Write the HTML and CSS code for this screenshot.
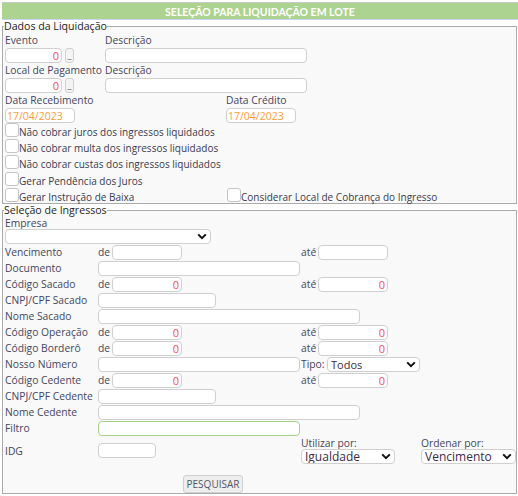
FILE: index.html
```html
<!DOCTYPE html>
<html>
<head>
<meta charset="utf-8">
<link rel="stylesheet" href="styles.css">
</head>
<body>
<div class="page">
  <div class="header">SELEÇÃO PARA LIQUIDAÇÃO EM LOTE</div>

  <fieldset class="fs fs1">
    <legend>Dados da Liquidação</legend>
    <div class="pair">
      <div class="cev">
        <div class="lbl">Evento</div>
        <div class="evwrap"><input class="inp w57 num" value="0"><span class="dots">_</span></div>
      </div>
      <div>
        <div class="lbl">Descrição</div>
        <input class="inp w202">
      </div>
    </div>
    <div class="pair">
      <div class="cev">
        <div class="lbl">Local de Pagamento</div>
        <div class="evwrap"><input class="inp w57 num" value="0"><span class="dots">_</span></div>
      </div>
      <div>
        <div class="lbl">Descrição</div>
        <input class="inp w202">
      </div>
    </div>
    <div class="pair">
      <div class="cdate">
        <div class="lbl">Data Recebimento</div>
        <input class="inp w69 date" value="17/04/2023">
      </div>
      <div>
        <div class="lbl">Data Crédito</div>
        <input class="inp w69 date" value="17/04/2023">
      </div>
    </div>
    <div class="chk"><span class="box"></span><span class="ctext">Não cobrar juros dos ingressos liquidados</span></div>
    <div class="chk"><span class="box"></span><span class="ctext">Não cobrar multa dos ingressos liquidados</span></div>
    <div class="chk"><span class="box"></span><span class="ctext">Não cobrar custas dos ingressos liquidados</span></div>
    <div class="chk"><span class="box"></span><span class="ctext">Gerar Pendência dos Juros</span></div>
    <div class="chk">
      <div class="chkcell"><span class="box"></span><span class="ctext">Gerar Instrução de Baixa</span></div>
      <div class="chkcell"><span class="box"></span><span class="ctext">Considerar Local de Cobrança do Ingresso</span></div>
    </div>
  </fieldset>

  <fieldset class="fs fs2">
    <legend>Seleção de Ingressos</legend>
    <div class="lbl lbl12">Empresa</div>
    <div class="sel w206"><select class="s"><option></option></select><svg class="chev" viewBox="0 0 10 7"><path d="M1.2 1.4 L5 5.2 L8.8 1.4" fill="none" stroke="#111" stroke-width="2"/></svg></div>

    <div class="row"><span class="rl">Vencimento</span><span class="de">de</span><input class="inp w70"><span class="sp"></span><span class="ate">até</span><input class="inp w70"></div>
    <div class="row"><span class="rl">Documento</span><input class="inp w202"></div>
    <div class="row"><span class="rl">Código Sacado</span><span class="de">de</span><input class="inp w70 num" value="0"><span class="sp"></span><span class="ate">até</span><input class="inp w70 num" value="0"></div>
    <div class="row"><span class="rl">CNPJ/CPF Sacado</span><input class="inp w118"></div>
    <div class="row"><span class="rl">Nome Sacado</span><input class="inp w262"></div>
    <div class="row"><span class="rl">Código Operação</span><span class="de">de</span><input class="inp w70 num" value="0"><span class="sp"></span><span class="ate">até</span><input class="inp w70 num" value="0"></div>
    <div class="row"><span class="rl">Código Borderô</span><span class="de">de</span><input class="inp w70 num" value="0"><span class="sp"></span><span class="ate">até</span><input class="inp w70 num" value="0"></div>
    <div class="row"><span class="rl">Nosso Número</span><input class="inp w202"><span class="tipo">Tipo:</span><div class="sel w93"><select class="s dark todos"><option>Todos</option></select><svg class="chev" viewBox="0 0 10 7"><path d="M1.2 1.4 L5 5.2 L8.8 1.4" fill="none" stroke="#111" stroke-width="2"/></svg></div></div>
    <div class="row"><span class="rl">Código Cedente</span><span class="de">de</span><input class="inp w70 num" value="0"><span class="sp"></span><span class="ate">até</span><input class="inp w70 num" value="0"></div>
    <div class="row"><span class="rl">CNPJ/CPF Cedente</span><input class="inp w118"></div>
    <div class="row"><span class="rl">Nome Cedente</span><input class="inp w262"></div>
    <div class="row"><span class="rl">Filtro</span><input class="inp w202 green"></div>

    <div class="lastrow">
      <span class="rl">IDG</span>
      <input class="inp w58">
      <span class="sp2"></span>
      <div class="cutil">
        <div class="lbl lbl11">Utilizar por:</div>
        <div class="sel w94"><select class="s dark"><option>Igualdade</option></select><svg class="chev" viewBox="0 0 10 7"><path d="M1.2 1.4 L5 5.2 L8.8 1.4" fill="none" stroke="#111" stroke-width="2"/></svg></div>
      </div>
      <div class="cord">
        <div class="lbl lbl11">Ordenar por:</div>
        <div class="sel w95"><select class="s dark"><option>Vencimento</option></select><svg class="chev" viewBox="0 0 10 7"><path d="M1.2 1.4 L5 5.2 L8.8 1.4" fill="none" stroke="#111" stroke-width="2"/></svg></div>
      </div>
    </div>
    <div class="btnrow"><button class="btn">PESQUISAR</button></div>
  </fieldset>
</div>
</body>
</html>
```

FILE: styles.css
```css
* { box-sizing: border-box; }
body {
  margin: 0;
  background: #ffffff;
  font-family: "Open Sans", Lato, sans-serif;
  font-size: 10.3px;
  color: #45455f;
}
.page {
  width: 518px;
  padding-top: 2px;
}
.header {
  border-top: 1px solid #c8c8c8;
  height: 18px;
  margin-left: 2px;
  background: #acd38f;
  border-bottom: 1px solid #c9d6ee;
  color: #ffffff;
  font-family: Lato, sans-serif;
  font-weight: bold;
  font-size: 10.5px;
  text-align: center;
  line-height: 16px;
  padding-top: 1px;
}
.fs {
  margin: 0 1px 0 2px;
  border: 1px solid #ababab;
  padding: 0 2px;
  background: #f9f9f9;
  min-width: 0;
}
legend {
  padding: 0;
  margin-left: -1px;
  font-size: 10.6px;
  line-height: 13px;
  color: #1e1e1e;
}
.fs1 { height: 184px; }
.fs2 { height: 290px; }
.lbl {
  line-height: 15px;
  white-space: nowrap;
}
.lbl12 { line-height: 12px; }
.lbl11 { line-height: 11px; }
.pair { display: flex; }
.cev { width: 100px; }
.cdate { width: 221px; }
.evwrap { display: flex; }
.inp {
  height: 15px;
  border: 1px solid #cfcfcf;
  border-radius: 4px;
  background: #ffffff;
  padding: 0 3px;
  font-family: inherit;
  font-size: 10px;
  color: #333;
  outline: none;
  margin: 0;
}
.num { text-align: right; color: #ff4a5a; font-size: 11px; padding: 0 2px; }
.date { color: #ff9b3a; font-size: 10.5px; padding: 0 1px; }
.green { border-color: #a6d38c; }
.w57 { width: 57px; }
.w58 { width: 58px; }
.w69 { width: 70px; }
.w70 { width: 70px; }
.w118 { width: 118px; }
.w202 { width: 202px; }
.w262 { width: 262px; }
.dots {
  width: 9px;
  height: 15px;
  margin-left: 3px;
  border: 1px solid #cfcfcf;
  border-radius: 3px;
  background: #f4f4f4;
  font-size: 9px;
  line-height: 11px;
  text-align: center;
  color: #555;
  overflow: hidden;
}
.chk {
  display: flex;
  height: 16.2px;
  align-items: flex-start;
}
.chkcell { display: flex; align-items: flex-start; }
.chkcell:first-child { width: 222px; }
.box {
  width: 14px;
  height: 14px;
  border: 1px solid #c4c4c4;
  border-radius: 3px;
  background: #ffffff;
  flex: none;
  margin-top: 0;
}
.ctext {
  line-height: 11px;
  margin-top: 4px;
  white-space: nowrap;
  font-size: 10px;
  color: #3a3a50;
}
.sel { position: relative; height: 15px; }
.s {
  -webkit-appearance: none;
  appearance: none;
  width: 100%;
  height: 15px;
  border: 1px solid #cfcfcf;
  border-radius: 4px;
  background: #ffffff;
  font-family: inherit;
  font-size: 12px;
  line-height: 13px;
  padding: 0 3px;
  color: #333;
  outline: none;
  margin: 0;
}
.s.dark { color: #3b2a48; }
.s.todos { font-size: 11px; }
.chev {
  position: absolute;
  right: 4px;
  top: 4px;
  width: 10px;
  height: 7px;
  pointer-events: none;
}
.w206 { width: 206px; }
.w93 { width: 93px; }
.w94 { width: 94px; }
.w95 { width: 95px; }
.row {
  display: flex;
  align-items: center;
  height: 16px;
  white-space: nowrap;
}
.rl { width: 93px; flex: none; }
.de { width: 14px; flex: none; }
.sp { width: 119px; flex: none; }
.ate { width: 17px; flex: none; }
.tipo { width: 27px; padding-left: 1px; flex: none; }
.lastrow {
  display: flex;
  align-items: center;
  height: 27px;
  margin-top: 1px;
}
.sp2 { width: 145px; flex: none; }
.cutil { width: 120px; flex: none; }
.cord { width: 96px; flex: none; }
.btnrow {
  padding-left: 178px;
  margin-top: 11px;
}
.btn {
  width: 60px;
  height: 18px;
  border: 1px solid #cfcfcf;
  border-radius: 3px;
  background: #eeeeee;
  color: #555566;
  font-family: inherit;
  font-size: 10px;
  padding: 0;
}
```
